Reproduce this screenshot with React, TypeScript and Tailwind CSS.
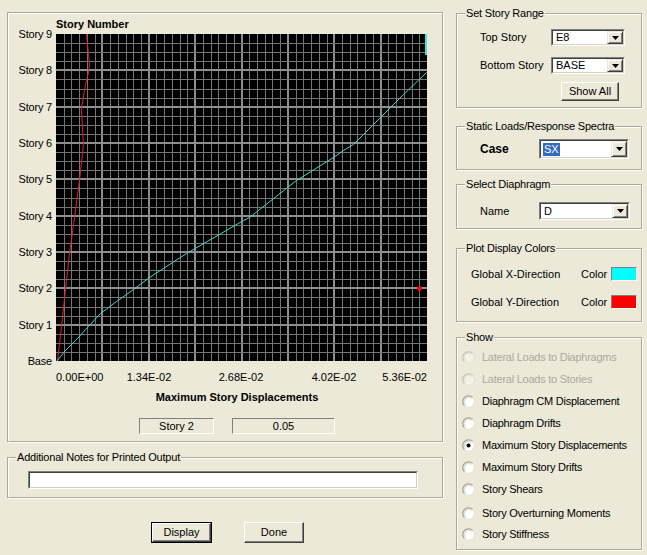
import React from 'react';

const W = 371;
const H = 327;

const cyanPts: [number, number][] = [
  [0, 327], [9, 316], [19, 306], [32, 292], [44, 279], [60, 267], [77, 255], [93, 243],
  [130, 219], [187, 186], [193, 183], [240, 146], [277, 123], [287, 116], [297, 110],
  [323, 84], [343, 64], [370, 38],
];

const redPts: [number, number][] = [
  [30, 0], [32, 20], [33, 30], [32, 38], [29, 50], [25, 74], [26, 95], [27, 110],
  [23, 146], [18, 183], [13, 219], [9, 255], [5, 292], [1, 327],
];

function toPath(pts: [number, number][]) {
  return pts.map(([x, y], i) => `${i ? 'L' : 'M'}${x + 0.5} ${y + 0.5}`).join(' ');
}

function Plot() {
  const verticals = Array.from({ length: 49 }, (_, i) => i);
  const horizontals = Array.from({ length: 37 }, (_, i) => i);
  return (
    <svg width={W} height={H} className="block bg-black" shapeRendering="crispEdges">
      {verticals.map((i) => {
        const x = Math.round((i * W) / 48);
        const major = i % 6 === 0;
        if (i === 0 || i === 48) return null;
        return (
          <line
            key={`v${i}`}
            x1={major ? x : x + 0.5}
            x2={major ? x : x + 0.5}
            y1={0}
            y2={H}
            stroke={major ? '#8e8e8e' : '#747474'}
            strokeWidth={major ? 2 : 1}
          />
        );
      })}
      {horizontals.map((j) => {
        const y = Math.round((j * H) / 36);
        const major = j % 4 === 0;
        if (j === 0 || j === 36) return null;
        return (
          <line
            key={`h${j}`}
            x1={0}
            x2={W}
            y1={major ? y : y + 0.5}
            y2={major ? y : y + 0.5}
            stroke={major ? '#8e8e8e' : '#747474'}
            strokeWidth={major ? 2 : 1}
          />
        );
      })}
      <g shapeRendering="auto" fill="none" strokeWidth={1}>
        <path d={toPath(redPts)} stroke="#e0202a" />
        <path d={toPath(cyanPts)} stroke="#40d8d0" />
        <line x1={370} y1={0} x2={370} y2={21} stroke="#40e0e0" strokeWidth={2} />
        <circle cx={363.5} cy={254.5} r={2.5} fill="#ff0000" />
      </g>
    </svg>
  );
}

function Frame({ label, className, children }: { label?: string; className?: string; children?: React.ReactNode }) {
  return (
    <div
      className={`relative border border-[#aca899] shadow-[inset_1px_1px_0_#fff,1px_1px_0_#fff] ${className ?? ''}`}
    >
      {label && (
        <span className="absolute -top-[7px] left-[8px] bg-[#ece9d8] px-[1px] leading-[13px] whitespace-nowrap tracking-[-0.2px]">
          {label}
        </span>
      )}
      {children}
    </div>
  );
}

function Sunken({ className, children }: { className?: string; children?: React.ReactNode }) {
  return (
    <div className={`border border-t-[#808080] border-l-[#808080] border-b-white border-r-white ${className ?? ''}`}>
      <div className="flex h-full w-full border border-t-[#404040] border-l-[#404040] border-b-[#d4d0c8] border-r-[#d4d0c8] bg-white">
        {children}
      </div>
    </div>
  );
}

function Combo({ value, className, highlight }: { value: string; className: string; highlight?: boolean }) {
  return (
    <Sunken className={className}>
      <div className="flex flex-1 items-center pl-[2px] leading-[13px]">
        {highlight ? <span className="bg-[#316ac5] px-[1px] text-white">{value}</span> : <span className="pl-[1px]">{value}</span>}
      </div>
      <div className="flex w-[16px] items-center justify-center border border-t-[#ece9d8] border-l-[#ece9d8] border-b-[#404040] border-r-[#404040] bg-[#ece9d8] shadow-[inset_1px_1px_0_#fff,inset_-1px_-1px_0_#808080]">
        <svg width="7" height="4" viewBox="0 0 7 4">
          <polygon points="0,0 7,0 3.5,4" fill="#000" />
        </svg>
      </div>
    </Sunken>
  );
}

function Button({ label, className, isDefault }: { label: string; className: string; isDefault?: boolean }) {
  return (
    <div className={`${isDefault ? 'border border-black' : ''} ${className}`}>
      <div className="flex h-full w-full items-center justify-center border border-t-white border-l-white border-b-[#404040] border-r-[#404040] bg-[#ece9d8] shadow-[inset_-1px_-1px_0_#808080] leading-[13px]">
        {label}
      </div>
    </div>
  );
}

function Radio({ label, checked, disabled, className }: { label: string; checked?: boolean; disabled?: boolean; className?: string }) {
  return (
    <div className={`flex items-center ${className ?? 'h-[22px]'}`}>
      <svg width="13" height="13" viewBox="0 0 13 13" className="mr-[7px] ml-[5px] shrink-0">
        <circle cx="6.5" cy="6.5" r="5.8" fill={disabled ? '#f2f1ea' : '#fff'} stroke="#e4e2d8" strokeWidth="1" />
        <path d="M2.4 10.6 A5.8 5.8 0 0 1 10.6 2.4" fill="none" stroke={disabled ? '#c8c5b8' : '#a8a596'} strokeWidth="1.3" />
        <path d="M3.6 9.4 A4.1 4.1 0 0 1 9.4 3.6" fill="none" stroke={disabled ? '#e0ded4' : '#d6d3c6'} strokeWidth="1" />
        {checked && <circle cx="6.5" cy="6.5" r="2" fill="#000" />}
      </svg>
      <span className={`leading-[13px] whitespace-nowrap tracking-[-0.25px] ${disabled ? 'text-[#aca899]' : 'text-black'}`}>{label}</span>
    </div>
  );
}

const stories = ['Story 9', 'Story 8', 'Story 7', 'Story 6', 'Story 5', 'Story 4', 'Story 3', 'Story 2', 'Story 1', 'Base'];

export default function App() {
  return (
    <div className="flex h-[555px] w-[647px] overflow-hidden bg-[#ece9d8] font-['Liberation_Sans',Arial,sans-serif] text-[11px] text-black">
      {/* left column */}
      <div className="ml-[7px] mt-[12px] flex w-[436px] flex-col">
        <Frame className="h-[430px]">
          <div className="flex">
            <div className="mt-[14px] flex h-[341px] w-[44px] flex-col items-end justify-between">
              {stories.map((s) => (
                <span key={s} className="leading-[14px] whitespace-nowrap tracking-[-0.2px]">{s}</span>
              ))}
            </div>
            <div className="ml-[4px] flex w-[371px] flex-col">
              <div className="pt-[5px] font-bold leading-[13px]">Story Number</div>
              <div className="mt-[3px]">
                <Plot />
              </div>
              <div className="relative mt-[10px] h-[13px] leading-[13px]">
                <span className="absolute left-0 top-0">0.00E+00</span>
                <span className="absolute left-[93px] top-0 -translate-x-1/2">1.34E-02</span>
                <span className="absolute left-[185px] top-0 -translate-x-1/2">2.68E-02</span>
                <span className="absolute left-[278px] top-0 -translate-x-1/2">4.02E-02</span>
                <span className="absolute right-0 top-0">5.36E-02</span>
              </div>
              <div className="mt-[7px] pr-[9px] text-center font-bold leading-[13px]">Maximum Story Displacements</div>
              <div className="ml-[83px] mt-[14px] flex gap-[18px]">
                <div className="flex h-[16px] w-[75px] items-center justify-center border border-t-[#808080] border-l-[#808080] border-b-white border-r-white leading-[13px]">
                  Story 2
                </div>
                <div className="flex h-[16px] w-[103px] items-center justify-center border border-t-[#808080] border-l-[#808080] border-b-white border-r-white leading-[13px]">
                  0.05
                </div>
              </div>
            </div>
          </div>
        </Frame>

        <Frame label="Additional Notes for Printed Output" className="mt-[15px] h-[41px]">
          <Sunken className="ml-[20px] mt-[13px] h-[18px] w-[390px]" />
        </Frame>

        <div className="ml-[144px] mt-[24px] flex gap-[32px]">
          <Button label="Display" className="h-[21px] w-[61px]" isDefault />
          <Button label="Done" className="h-[21px] w-[60px]" />
        </div>
      </div>

      {/* right column */}
      <div className="ml-[13px] mt-[13px] flex w-[186px] flex-col">
        <Frame label="Set Story Range" className="h-[95px]">
          <div className="flex flex-col pl-[23px] pt-[15px]">
            <div className="flex h-[17px] items-center">
              <span className="w-[71px]">Top Story</span>
              <Combo value="E8" className="h-[17px] w-[74px]" />
            </div>
            <div className="mt-[11px] flex h-[17px] items-center">
              <span className="w-[71px]">Bottom Story</span>
              <Combo value="BASE" className="h-[17px] w-[74px]" />
            </div>
            <Button label="Show All" className="ml-[81px] mt-[8px] h-[19px] w-[58px]" />
          </div>
        </Frame>

        <Frame label="Static Loads/Response Spectra" className="mt-[18px] h-[44px]">
          <div className="flex items-center pl-[23px] pt-[12px]">
            <span className="w-[59px] text-[12px] font-bold">Case</span>
            <Combo value="SX" className="h-[20px] w-[90px]" highlight />
          </div>
        </Frame>

        <Frame label="Select  Diaphragm" className="mt-[14px] h-[45px]">
          <div className="flex items-center pl-[23px] pt-[17px]">
            <span className="w-[59px]">Name</span>
            <Combo value="D" className="h-[18px] w-[91px]" />
          </div>
        </Frame>

        <Frame label="Plot Display Colors" className="mt-[19px] h-[74px]">
          <div className="flex flex-col pl-[14px] pt-[18px]">
            <div className="flex h-[14px] items-center">
              <span className="w-[110px]">Global X-Direction</span>
              <span className="w-[30px]">Color</span>
              <div className="h-[14px] w-[26px] border border-t-[#808080] border-l-[#808080] border-b-white border-r-white bg-[#00ffff]" />
            </div>
            <div className="mt-[14px] flex h-[14px] items-center">
              <span className="w-[110px]">Global Y-Direction</span>
              <span className="w-[30px]">Color</span>
              <div className="h-[14px] w-[26px] border border-t-[#808080] border-l-[#808080] border-b-white border-r-white bg-[#ff0000]" />
            </div>
          </div>
        </Frame>

        <Frame label="Show" className="mt-[15px] h-[213px]">
          <div className="flex flex-col pt-[8px]">
            <Radio label="Lateral Loads to Diaphragms" disabled />
            <Radio label="Lateral Loads to Stories" disabled />
            <Radio label="Diaphragm CM Displacement" />
            <Radio label="Diaphragm Drifts" />
            <Radio label="Maximum Story Displacements" checked />
            <Radio label="Maximum Story Drifts" />
            <Radio label="Story Shears" />
            <Radio label="Story Overturning Moments" className="mt-[2px] h-[22px]" />
            <Radio label="Story Stiffness" className="h-[20px]" />
          </div>
        </Frame>
      </div>
    </div>
  );
}
